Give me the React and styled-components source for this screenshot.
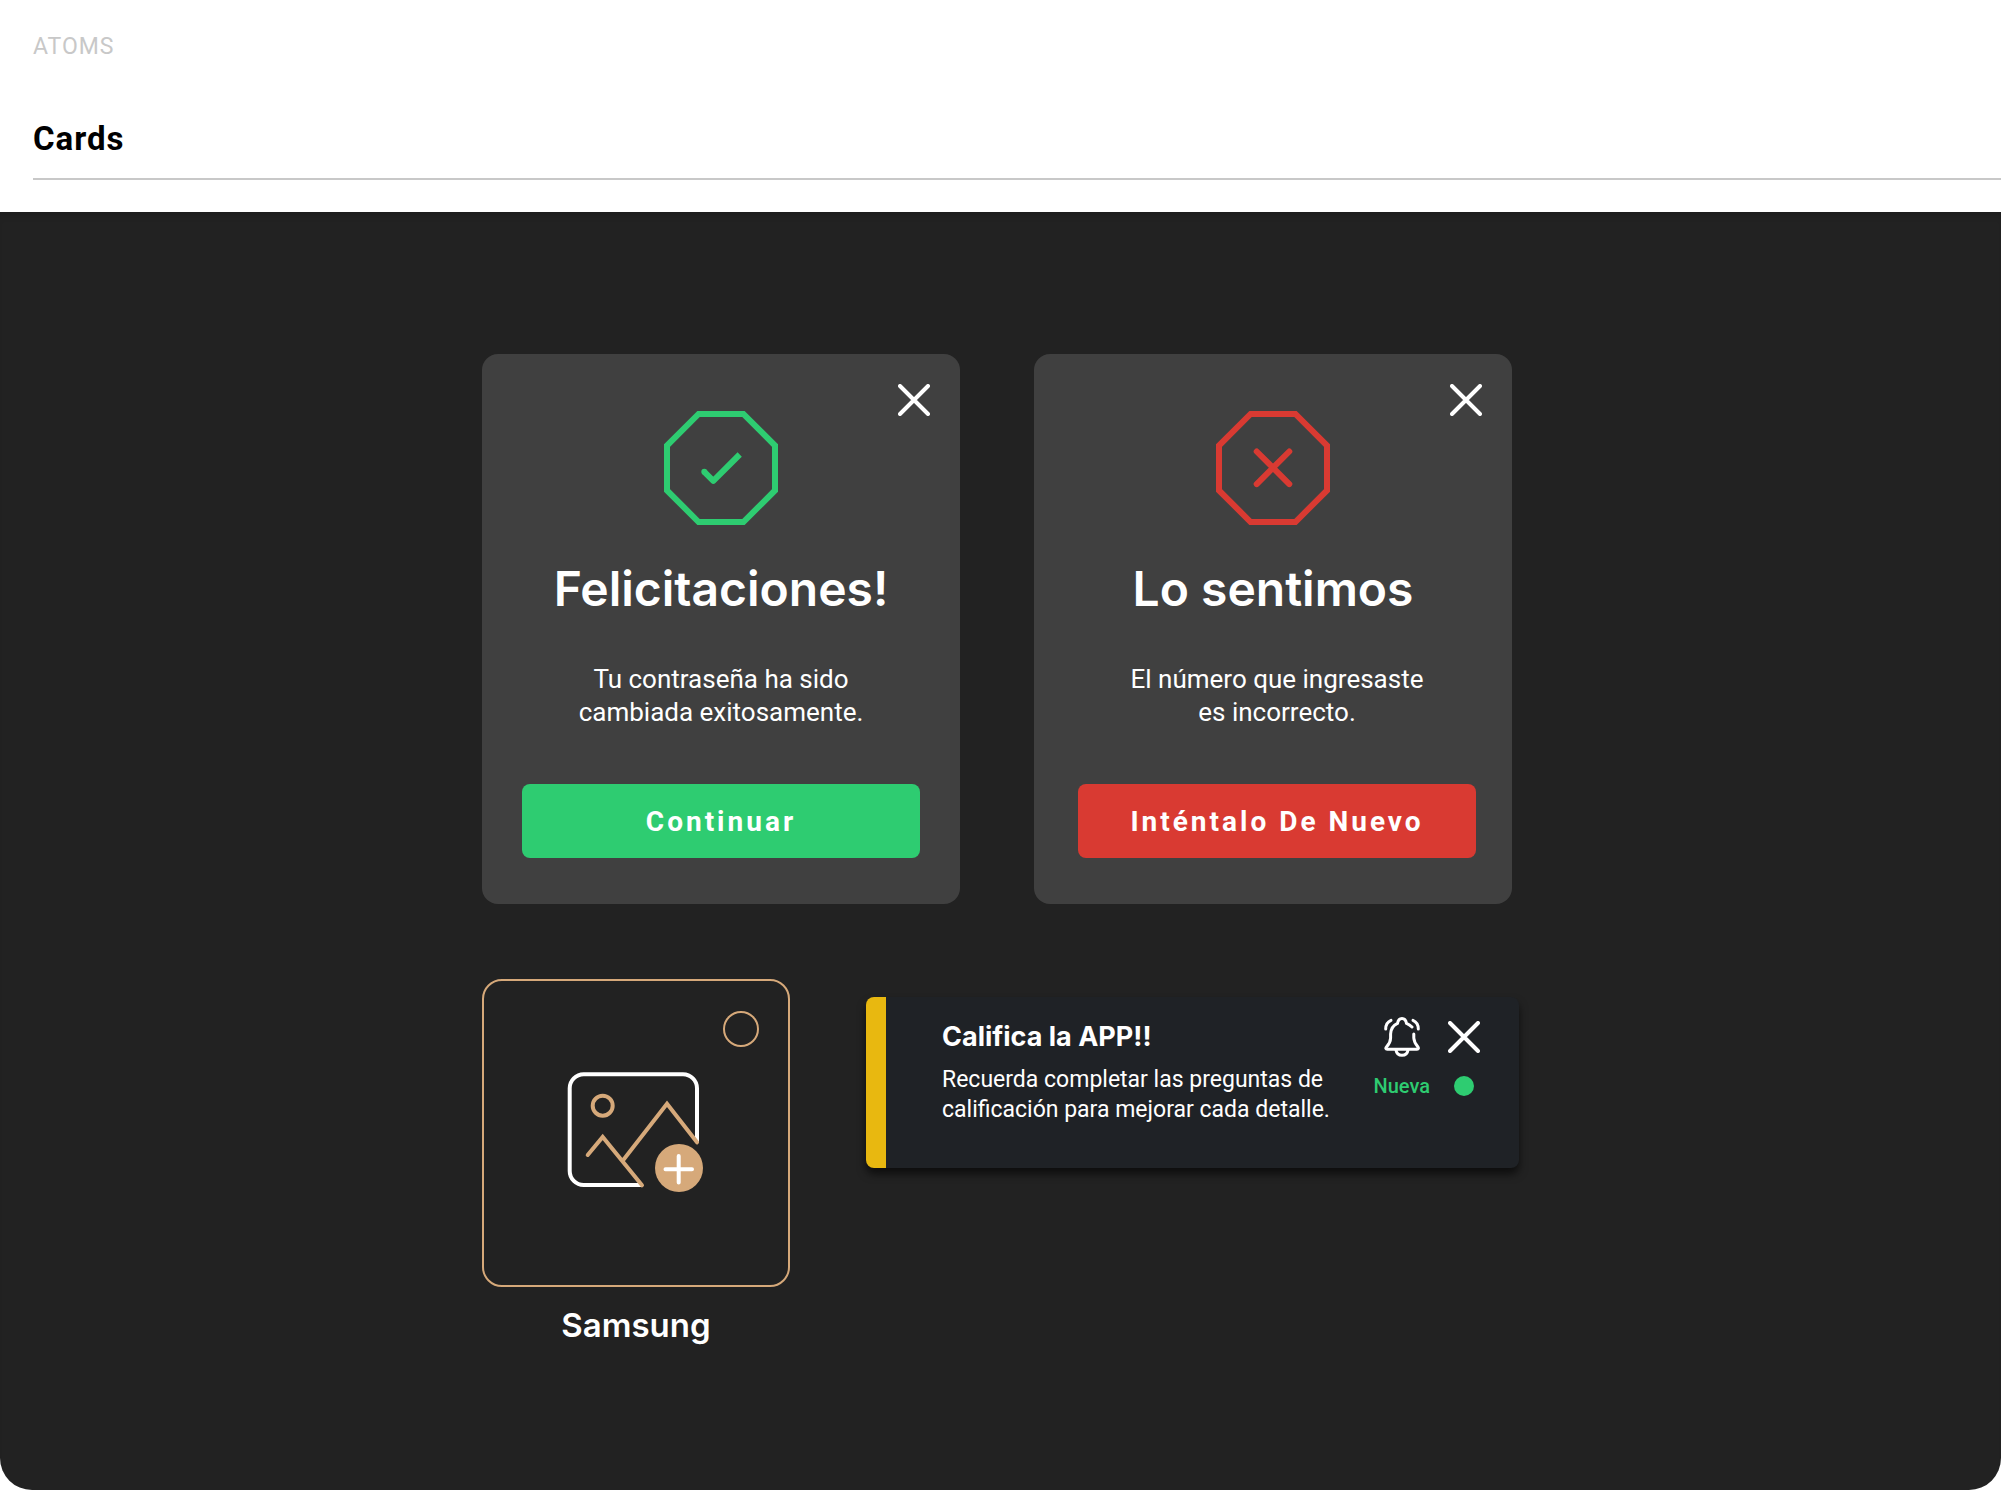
import React from "react";
import styled, { createGlobalStyle } from "styled-components";

const brand = '"Inter", "Liberation Sans", sans-serif';
const text = '"Roboto", "Liberation Sans", sans-serif';

const color = {
  panel: "#222222",
  card: "#404040",
  notice: "#1f2226",
  gold: "#d6a97a",
  green: "#2ecc71",
  red: "#d93a32",
  yellow: "#e8b810",
  rule: "#c8c8c8",
};

const GlobalStyle = createGlobalStyle`
  *, *::before, *::after { box-sizing: border-box; }
  body { margin: 0; background: #ffffff; font-family: ${text}; }
  h1, h2, h3, p { margin: 0; }
  button { border: 0; padding: 0; font: inherit; cursor: pointer; }
  svg { display: block; }
`;

const Page = styled.div`
  display: flex;
  flex-direction: column;
  min-height: 100vh;
`;

const Header = styled.header`
  padding: 33px 0 32px 33px;
`;

const Category = styled.p`
  font-size: 23px;
  line-height: 28px;
  letter-spacing: 1px;
  color: ${color.rule};
`;

const PageTitle = styled.h1`
  margin-top: 58px;
  padding-bottom: 19px;
  border-bottom: 2px solid ${color.rule};
  font-size: 33px;
  line-height: 40px;
  font-weight: 700;
  letter-spacing: 1px;
  color: #000000;
`;

const Panel = styled.main`
  flex: 1;
  padding: 142px 32px;
  background: ${color.panel};
  border-radius: 0 0 32px 32px;
  box-shadow: inset 0 8px 8px -6px rgba(0, 0, 0, 0.2);
`;

const Gallery = styled.div`
  display: flex;
  flex-direction: column;
  gap: 75px;
  max-width: 1037px;
  margin: 0 auto;
`;

const Row = styled.div`
  display: flex;
  flex-wrap: wrap;
  align-items: flex-start;
  gap: ${(p) => p.$gap}px;
`;

const Card = styled.article`
  display: flex;
  flex-direction: column;
  flex: 0 1 478px;
  padding: 30px 30px 46px;
  border-radius: 16px;
  background: ${color.card};
  color: #ffffff;
  text-align: center;
`;

const CardTop = styled.div`
  display: grid;
  grid-template-columns: 1fr auto 1fr;
  align-items: start;
`;

const Emblem = styled.div`
  grid-column: 2;
  padding-top: 27px;
`;

const IconButton = styled.button`
  justify-self: end;
  background: none;
  color: #ffffff;
`;

const CardTitle = styled.h2`
  margin-top: 36px;
  font-family: ${brand};
  font-size: 48px;
  line-height: 56px;
  font-weight: 600;
`;

const CardBody = styled.div`
  padding: ${(p) => p.$inset};
`;

const CardText = styled.p`
  margin-top: 46px;
  font-size: 26px;
  line-height: 33px;
  white-space: pre-line;
`;

const ActionButton = styled.button`
  width: 100%;
  height: 74px;
  margin-top: 55px;
  border-radius: 8px;
  background: ${(p) => p.$tone};
  color: #ffffff;
  && {
    font-size: 28px;
    font-weight: 700;
    letter-spacing: 3px;
  }
`;

const Figure = styled.label`
  display: flex;
  flex-direction: column;
  gap: 18px;
  width: 308px;
  text-align: center;
  cursor: pointer;
`;

const Tile = styled.span`
  display: grid;
  place-items: center;
  height: 308px;
  border: 2px solid ${color.gold};
  border-radius: 20px;

  > * {
    grid-area: 1 / 1;
  }
`;

const Picker = styled.input`
  place-self: start end;
  appearance: none;
  width: 36px;
  height: 36px;
  margin: 30px 29px;
  border: 2px solid ${color.gold};
  border-radius: 50%;

  &:checked {
    background: ${color.gold};
  }
`;

const FigureTitle = styled.span`
  font-family: ${brand};
  font-size: 33px;
  line-height: 40px;
  font-weight: 600;
  color: #ffffff;
`;

const Notice = styled.article`
  display: flex;
  flex: 1;
  margin-top: 18px;
  border-left: 20px solid ${color.yellow};
  border-radius: 8px;
  background: ${color.notice};
  box-shadow: 0 6px 8px rgba(0, 0, 0, 0.6);
  min-height: 171px;
  padding: 20px 39px 20px 56px;
  color: #ffffff;
`;

const NoticeCopy = styled.div`
  flex: 1;
`;

const NoticeTitle = styled.h3`
  font-family: ${brand};
  font-size: 27px;
  line-height: 40px;
  font-weight: 700;
`;

const NoticeText = styled.p`
  margin-top: 8px;
  font-size: 23px;
  line-height: 30px;
  font-weight: 400;
  white-space: pre;
`;

const NoticeAside = styled.div`
  display: grid;
  grid-template-columns: auto auto;
  grid-template-rows: 40px 24px;
  column-gap: 18px;
  row-gap: 17px;
  align-content: start;
  align-items: center;
  justify-items: center;
`;

const Status = styled.span`
  font-size: 20px;
  line-height: 24px;
  font-weight: 500;
  color: ${color.green};
`;

const Dot = styled.span`
  width: 20px;
  height: 20px;
  border-radius: 50%;
  background: ${color.green};
`;

const CloseIcon = () => (
  <svg width="32" height="32" viewBox="0 0 32 32" fill="none" stroke="currentColor" strokeWidth="4" strokeLinecap="round" aria-hidden="true">
    <path d="M2 2 30 30M30 2 2 30" />
  </svg>
);

const Octagon = ({ stroke, children }) => (
  <svg width="114" height="114" viewBox="0 0 114 114" fill="none" stroke={stroke} strokeWidth="6" aria-hidden="true">
    <path d="M34.6 3H79.4L111 34.6V79.4L79.4 111H34.6L3 79.4V34.6Z" />
    {children}
  </svg>
);

const SuccessIcon = () => (
  <Octagon stroke={color.green}>
    <path d="M40.3 60.8 49.3 69.8 75.7 43.5" strokeLinejoin="round" />
    <circle cx="40.3" cy="60.8" r="3" fill={color.green} stroke="none" />
  </Octagon>
);

const ErrorIcon = () => (
  <Octagon stroke={color.red}>
    <path d="M40.7 40.5 73.3 73.1M73.3 40.5 40.7 73.1" strokeLinecap="round" />
  </Octagon>
);

const PictureIcon = () => (
  <svg width="138" height="122" viewBox="0 0 138 122" fill="none" strokeWidth="4" strokeLinecap="round" aria-hidden="true">
    <path stroke="#ffffff" d="M130 69V16.3A14 14 0 0 0 116 2.3H16.7A14 14 0 0 0 2.7 16.3V99A14 14 0 0 0 16.7 113H74" />
    <g stroke={color.gold}>
      <circle cx="35.7" cy="33.7" r="10" />
      <path d="M20.7 83 35.7 65 75 113.3M55.7 88.7 100 31.7 130 70.3" />
    </g>
    <circle cx="112" cy="96" r="24" fill={color.gold} />
    <path stroke="#ffffff" d="M98.5 97.3H125M111.700 84V110.5" />
  </svg>
);

const BellIcon = () => (
  <svg width="36" height="40" viewBox="0 0 36 40" fill="none" stroke="currentColor" strokeWidth="3" strokeLinecap="round" strokeLinejoin="round" aria-hidden="true">
    <path d="M28 10C26.500 8.500 24.500 7.200 22.500 6.400C22 3.500 20.500 1.500 18 1.500S14 3.500 13.500 6.400C9 8.500 6.800 12 6.600 17V21C6.500 25 4.800 27.500 2.600 29.800C1.300 31.200 1.800 32.200 3.200 32.200H33C34.500 32.200 34.800 31 33.800 29.800C31 26.500 30 24.500 29.800 21V17" />
    <path d="M12 33C12.500 36.500 15 38.300 18 38.300S23.500 36.500 24 33" />
    <path d="M1.700 12C1.700 8 3.500 4.800 7 3.300M29 3.300C32.500 4.800 34.300 8 34.300 12" />
  </svg>
);

const dialogs = [
  {
    title: "Felicitaciones!",
    text: "Tu contraseña ha sido\ncambiada exitosamente.",
    action: "Continuar",
    tone: color.green,
    inset: "0 10px",
    Icon: SuccessIcon,
  },
  {
    title: "Lo sentimos",
    text: "El número que ingresaste\nes incorrecto.",
    action: "Inténtalo De Nuevo",
    tone: color.red,
    inset: "0 6px 0 14px",
    Icon: ErrorIcon,
  },
];

export default function App() {
  return (
    <Page>
      <GlobalStyle />
      <Header>
        <Category>ATOMS</Category>
        <PageTitle>Cards</PageTitle>
      </Header>
      <Panel>
        <Gallery>
          <Row $gap={74}>
            {dialogs.map(({ title, text: copy, action, tone, inset, Icon }) => (
              <Card key={title}>
                <CardTop>
                  <Emblem>
                    <Icon />
                  </Emblem>
                  <IconButton type="button" aria-label="Cerrar">
                    <CloseIcon />
                  </IconButton>
                </CardTop>
                <CardTitle>{title}</CardTitle>
                <CardBody $inset={inset}>
                  <CardText>{copy}</CardText>
                  <ActionButton type="button" $tone={tone}>
                    {action}
                  </ActionButton>
                </CardBody>
              </Card>
            ))}
          </Row>
          <Row $gap={76}>
            <Figure>
              <Tile>
                <PictureIcon />
                <Picker type="checkbox" />
              </Tile>
              <FigureTitle>Samsung</FigureTitle>
            </Figure>
            <Notice>
              <NoticeCopy>
                <NoticeTitle>Califica la APP!!</NoticeTitle>
                <NoticeText>{"Recuerda completar las preguntas de\ncalificación para mejorar cada detalle."}</NoticeText>
              </NoticeCopy>
              <NoticeAside>
                <BellIcon />
                <IconButton type="button" aria-label="Cerrar">
                  <CloseIcon />
                </IconButton>
                <Status>Nueva</Status>
                <Dot />
              </NoticeAside>
            </Notice>
          </Row>
        </Gallery>
      </Panel>
    </Page>
  );
}
